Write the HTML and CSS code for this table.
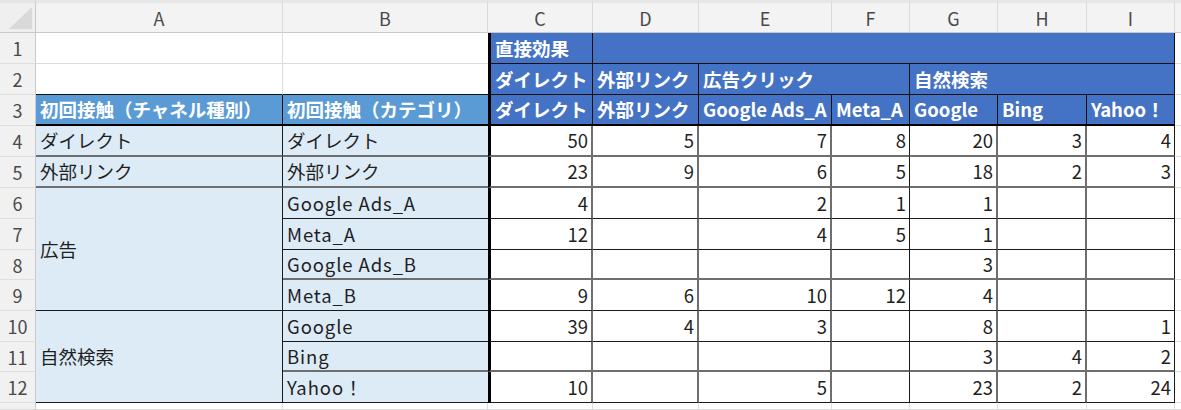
FILE: index.html
```html
<!DOCTYPE html>
<html lang="ja">
<head>
<meta charset="utf-8">
<link rel="stylesheet" href="styles.css">
</head>
<body>
<div class="sheet">
  <div class="row hdr">
    <div class="cell corner"></div>
    <div class="cell ch">A</div><div class="cell ch">B</div><div class="cell ch">C</div><div class="cell ch">D</div><div class="cell ch">E</div><div class="cell ch">F</div><div class="cell ch">G</div><div class="cell ch">H</div><div class="cell ch">I</div><div class="cell ch chj"></div>
  </div>
  <div class="row r1">
    <div class="cell rh">1</div>
    <div class="cell a"></div><div class="cell b"></div>
    <div class="cell hb cC">直接効果</div>
    <div class="cell hb span6"></div>
    <div class="cell j"></div>
  </div>
  <div class="row r2">
    <div class="cell rh">2</div>
    <div class="cell a"></div><div class="cell b"></div>
    <div class="cell hb cC">ダイレクト</div>
    <div class="cell hb">外部リンク</div>
    <div class="cell hb span2">広告クリック</div>
    <div class="cell hb span3">自然検索</div>
    <div class="cell j"></div>
  </div>
  <div class="row r3">
    <div class="cell rh">3</div>
    <div class="cell lb a">初回接触（チャネル種別）</div>
    <div class="cell lb b">初回接触（カテゴリ）</div>
    <div class="cell hb cC">ダイレクト</div>
    <div class="cell hb">外部リンク</div>
    <div class="cell hb">Google Ads_A</div>
    <div class="cell hb">Meta_A</div>
    <div class="cell hb">Google</div>
    <div class="cell hb">Bing</div>
    <div class="cell hb">Yahoo！</div>
    <div class="cell j"></div>
  </div>
  <div class="row body gray">
    <div class="cell rh">4</div>
    <div class="cell pale a">ダイレクト</div><div class="cell pale b">ダイレクト</div>
    <div class="cell num cC">50</div><div class="cell num cD">5</div><div class="cell num cE">7</div><div class="cell num cF">8</div><div class="cell num cG">20</div><div class="cell num cH">3</div><div class="cell num cI">4</div>
    <div class="cell j"></div>
  </div>
  <div class="row body gray">
    <div class="cell rh">5</div>
    <div class="cell pale a">外部リンク</div><div class="cell pale b">外部リンク</div>
    <div class="cell num cC">23</div><div class="cell num cD">9</div><div class="cell num cE">6</div><div class="cell num cF">5</div><div class="cell num cG">18</div><div class="cell num cH">2</div><div class="cell num cI">3</div>
    <div class="cell j"></div>
  </div>
  <div class="row body">
    <div class="cell rh">6</div>
    <div class="cell pale a span4r">広告</div><div class="cell pale b lat">Google Ads_A</div>
    <div class="cell num cC">4</div><div class="cell num cD"></div><div class="cell num cE">2</div><div class="cell num cF">1</div><div class="cell num cG">1</div><div class="cell num cH"></div><div class="cell num cI"></div>
    <div class="cell j"></div>
  </div>
  <div class="row body">
    <div class="cell rh">7</div>
    <div class="cell pale b lat">Meta_A</div>
    <div class="cell num cC">12</div><div class="cell num cD"></div><div class="cell num cE">4</div><div class="cell num cF">5</div><div class="cell num cG">1</div><div class="cell num cH"></div><div class="cell num cI"></div>
    <div class="cell j"></div>
  </div>
  <div class="row body gray">
    <div class="cell rh">8</div>
    <div class="cell pale b lat">Google Ads_B</div>
    <div class="cell num cC"></div><div class="cell num cD"></div><div class="cell num cE"></div><div class="cell num cF"></div><div class="cell num cG">3</div><div class="cell num cH"></div><div class="cell num cI"></div>
    <div class="cell j"></div>
  </div>
  <div class="row body">
    <div class="cell rh">9</div>
    <div class="cell pale b lat">Meta_B</div>
    <div class="cell num cC">9</div><div class="cell num cD">6</div><div class="cell num cE">10</div><div class="cell num cF">12</div><div class="cell num cG">4</div><div class="cell num cH"></div><div class="cell num cI"></div>
    <div class="cell j"></div>
  </div>
  <div class="row body">
    <div class="cell rh">10</div>
    <div class="cell pale a span3r">自然検索</div><div class="cell pale b lat">Google</div>
    <div class="cell num cC">39</div><div class="cell num cD">4</div><div class="cell num cE">3</div><div class="cell num cF"></div><div class="cell num cG">8</div><div class="cell num cH"></div><div class="cell num cI">1</div>
    <div class="cell j"></div>
  </div>
  <div class="row body gray">
    <div class="cell rh">11</div>
    <div class="cell pale b lat">Bing</div>
    <div class="cell num cC"></div><div class="cell num cD"></div><div class="cell num cE"></div><div class="cell num cF"></div><div class="cell num cG">3</div><div class="cell num cH">4</div><div class="cell num cI">2</div>
    <div class="cell j"></div>
  </div>
  <div class="row body">
    <div class="cell rh">12</div>
    <div class="cell pale b lat">Yahoo！</div>
    <div class="cell num cC">10</div><div class="cell num cD"></div><div class="cell num cE">5</div><div class="cell num cF"></div><div class="cell num cG">23</div><div class="cell num cH">2</div><div class="cell num cI">24</div>
    <div class="cell j"></div>
  </div>
  <div class="row r13">
    <div class="cell rh"></div>
    <div class="cell"></div><div class="cell"></div><div class="cell"></div><div class="cell"></div><div class="cell"></div><div class="cell"></div><div class="cell"></div><div class="cell"></div><div class="cell"></div><div class="cell j"></div>
  </div>
</div>
</body>
</html>
```

FILE: styles.css
```css
html, body {
  margin: 0;
  padding: 0;
  background: #ffffff;
  overflow: hidden;
  height: 410px;
}

.sheet {
  display: grid;
  grid-template-columns: 36px 247px 205px 105px 106px 133px 78px 88px 89px 88px 6px;
  grid-template-rows: 33px 31px 31px 31px 31px 31px 31px 31px 30px 31px 31px 30px 31px 7px;
  font-family: "Noto Sans CJK JP", "Noto Sans", sans-serif;
  font-size: 18.5px;
  color: #1f1f1f;
}

.row { display: contents; }

.cell {
  box-sizing: border-box;
  display: flex;
  align-items: center;
  padding: 0 4px;
  white-space: nowrap;
  overflow: hidden;
  background: #ffffff;
  border-right: 1px solid #dcdcdc;
  border-bottom: 1px solid #dcdcdc;
  line-height: 1;
}

.lat { letter-spacing: 0.9px; }

/* headers */
.corner {
  position: relative;
  background: #efefef;
  border-top: 3px solid #e4e4e4;
  border-right: 1px solid #c9c9c9;
  border-bottom: 1px solid #c9c9c9;
}
.corner::after {
  content: "";
  position: absolute;
  right: 3px;
  bottom: 3px;
  width: 23px;
  height: 22px;
  background: #d9d9d9;
  clip-path: polygon(100% 0, 100% 100%, 0 100%);
}
.ch {
  justify-content: center;
  background: #f3f3f3;
  color: #4a4a4a;
  border-top: 3px solid #e6e6e6;
  border-right: 1px solid #dadada;
  border-bottom: 1px solid #c9c9c9;
  font-size: 18px;
}
.chj { border-right: 0; }
.rh {
  justify-content: center;
  padding: 0;
  background: #f1f1f1;
  color: #4a4a4a;
  font-size: 18px;
  border-right: 1px solid #c9c9c9;
  border-bottom: 1px solid #dedede;
}
.j { border-right: 0; }

/* blue header cells */
.hb {
  background: #4472c4;
  color: #ffffff;
  font-weight: 700;
  border-right: 1px solid #111;
  border-bottom: 1px solid #111;
}
.span6 { grid-column: span 6; }
.span2 { grid-column: span 2; }
.span3 { grid-column: span 3; }
.span4r { grid-row: span 4; }
.span3r { grid-row: span 3; }

.cC { border-left: 3px solid #000; }

.r2 > .a, .r2 > .b { border-bottom: 1px solid #111; }
.r1 > .b, .r2 > .b { border-right: 0; }

.lb {
  background: #5b9bd5;
  color: #ffffff;
  font-weight: 700;
  border-right: 1px solid #111;
}
.r3 > .cell:not(.rh):not(.j) { border-bottom: 2px solid #000; }
.r3 > .b { border-right: 0; }

/* body */
.pale { background: #ddebf7; }
.body > .cell:not(.rh):not(.j) { border-bottom: 1px solid #1a1a1a; }
.body.gray > .cell:not(.rh):not(.j):not(.span4r):not(.span3r) { border-bottom: 2px solid #6e6e6e; }
.body > .a { border-right: 1px solid #1a1a1a; border-bottom: 1px solid #1a1a1a; }
.body > .b { border-right: 0; }
.num { justify-content: flex-end; padding: 0 3px 0 0; }
.body > .cC, .body > .cD, .body > .cE, .body > .cG, .body > .cH { border-right: 2px solid #6e6e6e; }
.body > .cF, .body > .cI { border-right: 1px solid #1a1a1a; }
.body.gray > .a { border-bottom: 2px solid #6e6e6e; }
```
